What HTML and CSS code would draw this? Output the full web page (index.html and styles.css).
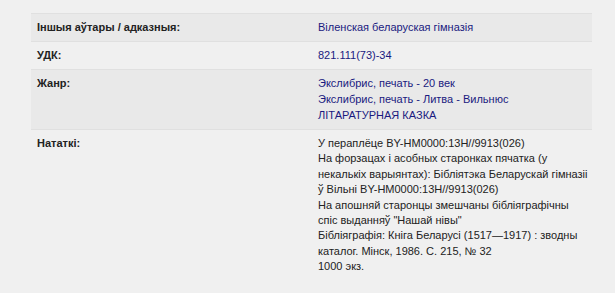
FILE: index.html
```html
<!DOCTYPE html>
<html lang="be">
<head>
<meta charset="utf-8">
<title>Запіс</title>
<link rel="stylesheet" href="styles.css">
</head>
<body>
<div class="record">
  <div class="row row-odd">
    <div class="label">Іншыя аўтары / адказныя:</div>
    <div class="value"><a class="link" href="#">Віленская беларуская гімназія</a></div>
  </div>
  <div class="row">
    <div class="label">УДК:</div>
    <div class="value"><a class="link" href="#">821.111(73)-34</a></div>
  </div>
  <div class="row row-odd">
    <div class="label">Жанр:</div>
    <div class="value">
      <a class="link block" href="#">Экслибрис, печать - 20 век</a>
      <a class="link block" href="#">Экслибрис, печать - Литва - Вильнюс</a>
      <a class="link block" href="#">ЛІТАРАТУРНАЯ КАЗКА</a>
    </div>
  </div>
  <div class="row">
    <div class="label">Нататкі:</div>
    <div class="value notes">
      <div>У пераплёце BY-HM0000:13H//9913(026)</div>
      <div>На форзацах і асобных старонках пячатка (у<br>некалькіх варыянтах): Бібліятэка Беларускай гімназіі<br>ў Вільні BY-HM0000:13H//9913(026)</div>
      <div>На апошняй старонцы змешчаны бібліяграфічны<br>спіс выданняў "Нашай нівы"</div>
      <div>Бібліяграфія: Кніга Беларусі (1517—1917) : зводны<br>каталог. Мінск, 1986. С. 215, № 32</div>
      <div>1000 экз.</div>
    </div>
  </div>
</div>
</body>
</html>
```

FILE: styles.css
```css
html, body {
  margin: 0;
  background: #f0f0f0;
}
body {
  padding: 13px 23px 0 31px;
  font-family: "Liberation Sans", Arial, sans-serif;
  font-size: 11px;
  color: #222222;
}
.record {
  display: flex;
  flex-direction: column;
}
.row {
  display: grid;
  grid-template-columns: 281px 1fr;
  border-top: 1px solid #e0e0e0;
  line-height: 16px;
}
.row-odd {
  background: #e9e9e9;
}
.label {
  padding: 5px 6px 6px;
  font-weight: bold;
  color: #222222;
}
.value {
  padding: 5px 6px 6px;
}
.link {
  color: #1a1a80;
  text-decoration: none;
}
.block {
  display: block;
}
.notes {
  padding-top: 6px;
  line-height: 15.4px;
  color: #222222;
  white-space: nowrap;
}
```
